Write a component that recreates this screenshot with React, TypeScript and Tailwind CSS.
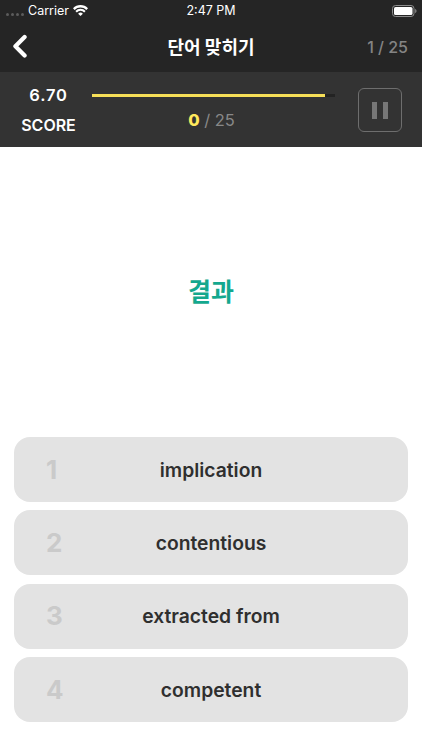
import type { FC } from "react";

interface AnswerOptionProps {
  index: number;
  label: string;
}

const options = ["implication", "contentious", "extracted from", "competent"];

const StatusBar: FC = () => {
  return (
    <div className="h-5 grid grid-cols-3 items-center text-[12.5px] leading-5 text-white">
      <div className="flex items-center pl-[6px]">
        <div className="flex gap-[2px] pt-[7px]">
          <span className="size-[3px] rounded-full bg-[#5c5c5c]" />
          <span className="size-[3px] rounded-full bg-[#5c5c5c]" />
          <span className="size-[3px] rounded-full bg-[#5c5c5c]" />
          <span className="size-[3px] rounded-full bg-[#5c5c5c]" />
        </div>
        <span className="ml-[4px] w-[40px] pt-px whitespace-nowrap">Carrier</span>
        <svg className="ml-[5px]" width="15" height="11" viewBox="0 0 15 11" fill="none">
          <path d="M0.8 4.1 A9.3 9.3 0 0 1 14.2 4.1" stroke="#fff" strokeWidth="2.3" />
          <path d="M3.1 6.7 A6 6 0 0 1 11.9 6.7" stroke="#fff" strokeWidth="2" />
          <path d="M7.5 11 L5.1 8.8 A3.4 3.4 0 0 1 9.9 8.8 Z" fill="#fff" />
        </svg>
      </div>
      <span className="pt-px text-center">2:47 PM</span>
      <div className="flex justify-end pr-[5px]">
        <svg width="25" height="12" viewBox="0 0 25 12" fill="none">
          <rect x="0.5" y="0.5" width="21.5" height="11" rx="3" stroke="#8c8c8c" />
          <rect x="2" y="2" width="18.5" height="8" rx="1.6" fill="#fff" />
          <path d="M23.2 4 C24.9 4.5 24.9 7.5 23.2 8 Z" fill="#8c8c8c" />
        </svg>
      </div>
    </div>
  );
};

const Header: FC = () => {
  return (
    <div className="h-[52px] grid grid-cols-3 items-center">
      <button type="button" className="pl-[13px]" aria-label="Back">
        <svg width="14" height="24" viewBox="0 0 14 24" fill="none">
          <path
            d="M11.6 3 L2.4 12.3 L11.6 21.4"
            stroke="#fff"
            strokeWidth="4.2"
            strokeLinecap="round"
            strokeLinejoin="round"
          />
        </svg>
      </button>
      <h1 className="pt-[3px] text-center text-[18px] leading-6 font-bold text-white whitespace-nowrap">
        단어 맞히기
      </h1>
      <span className="pt-[2px] pr-[14px] text-right text-[16px] leading-6 font-medium text-[#848484]">
        1 / 25
      </span>
    </div>
  );
};

const ScorePanel: FC = () => {
  return (
    <div className="h-[75px] bg-[#333333] flex">
      <div className="w-[92px] pl-[5px] pt-[8px] text-center font-semibold text-white">
        <p className="text-[16.5px] leading-[30px] tracking-[0.8px]">6.70</p>
        <p className="text-[16px] leading-[30px]">SCORE</p>
      </div>
      <div className="w-[243px] pt-[22px] text-center">
        <div className="h-[3px] bg-[#232323]">
          <div className="h-full w-[233px] bg-[#f6df58]" />
        </div>
        <p className="pt-[11px] pr-[4px] text-[16.5px] leading-6 text-[#888888]">
          <span className="font-extrabold text-[#ffe95c]">0</span> / 25
        </p>
      </div>
      <button
        type="button"
        aria-label="Pause"
        className="ml-[23px] mt-[16px] size-[44px] rounded-[6px] border border-[#6e6e6e] flex items-center justify-center gap-[6px]"
      >
        <span className="w-[5px] h-[17px] bg-[#777777]" />
        <span className="w-[5px] h-[17px] bg-[#777777]" />
      </button>
    </div>
  );
};

const AnswerOption: FC<AnswerOptionProps> = ({ index, label }) => {
  return (
    <button
      type="button"
      className="h-[65px] w-full rounded-[16px] bg-[#e3e3e3] grid grid-cols-[60px_1fr_60px] items-center"
    >
      <span className="pl-[32px] text-left text-[26px] leading-8 font-bold text-[#cacaca]">
        {index}
      </span>
      <span className="text-center text-[19.3px] leading-7 font-semibold text-[#2f2f2f]">
        {label}
      </span>
    </button>
  );
};

export default function App() {
  return (
    <div className="w-[422px] h-[750px] overflow-hidden bg-white flex flex-col font-[Inter,'Noto_Sans_CJK_KR',sans-serif]">
      <div className="bg-[#252525]">
        <StatusBar />
        <Header />
      </div>
      <ScorePanel />
      <main className="h-[290px] flex items-center justify-center">
        <p className="text-[25px] leading-8 font-bold text-[#14a88e]">결과</p>
      </main>
      <div className="px-[14px] flex flex-col gap-[8.4px]">
        {options.map((label, i) => (
          <AnswerOption key={label} index={i + 1} label={label} />
        ))}
      </div>
    </div>
  );
}
